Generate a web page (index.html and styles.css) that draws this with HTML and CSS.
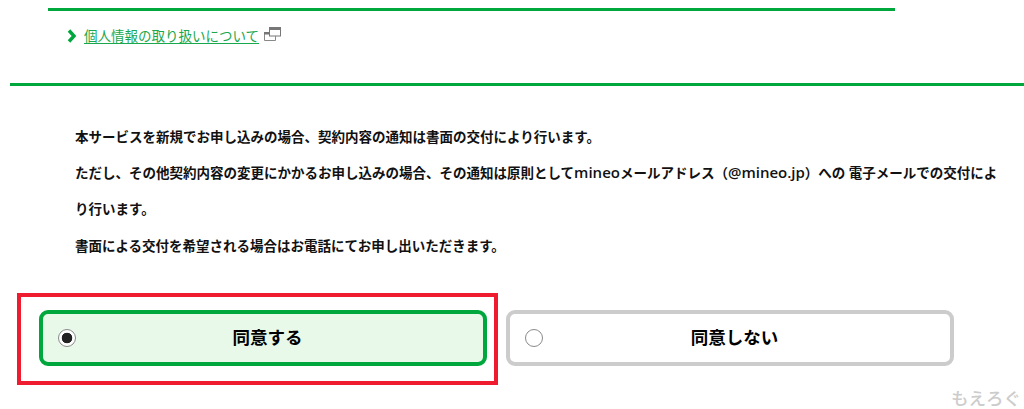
FILE: index.html
```html
<!DOCTYPE html>
<html lang="ja">
<head>
    <meta charset="UTF-8">
    <meta name="viewport" content="width=device-width, initial-scale=1.0">
    <title>同意確認</title>
    <link rel="stylesheet" href="styles.css">
</head>
<body>

    <div class="privacy">
        <div class="privacy-link">
            <svg class="chevron" width="10" height="14" viewBox="0 0 10 14"><path d="M2 1.5 L7 7 L2 12.5" fill="none" stroke="#00a73c" stroke-width="3.4"/></svg>
            <a href="#">個人情報の取り扱いについて</a>
            <svg class="window-icon" width="17" height="14" viewBox="0 0 17 14">
                <rect x="5.5" y="0.5" width="11" height="8.5" fill="#fff" stroke="#777"/>
                <rect x="5" y="0" width="12" height="3" fill="#777"/>
                <path d="M5 5.5H0.5V13.5H11.5V9" fill="none" stroke="#888"/>
                <rect x="0" y="5" width="5" height="2.5" fill="#777"/>
            </svg>
        </div>
    </div>

    <div class="notice">
        <p>本サービスを新規でお申し込みの場合、契約内容の通知は書面の交付により行います。</p>
        <p>ただし、その他契約内容の変更にかかるお申し込みの場合、その通知は原則として<span class="latin">mineo</span>メールアドレス（<span class="latin">@mineo.jp</span>）への 電子メールでの交付により行います。</p>
        <p>書面による交付を希望される場合はお電話にてお申し出いただきます。</p>
    </div>

    <div class="choices">
        <div class="highlight">
            <label class="choice choice-on">
                <span class="radio radio-on"></span>
                <span class="choice-text">同意する</span>
            </label>
        </div>
        <label class="choice">
            <span class="radio"></span>
            <span class="choice-text">同意しない</span>
        </label>
    </div>

    <div class="watermark">もえろぐ</div>

</body>
</html>
```

FILE: styles.css
```css
html, body {
    height: 100%;
}

body {
    margin: 0;
    overflow: hidden;
    background-color: #fff;
    color: #111;
    font-family: "Open Sans", "Noto Sans CJK JP", sans-serif;
    font-size: 13.5px;
}

.privacy {
    margin: 0 129px 0 48px;
    padding-top: 8px;
}

.privacy::before {
    content: "";
    display: block;
    height: 3px;
    background-color: #00a73c;
}

.privacy-link {
    display: flex;
    align-items: center;
    height: 48px;
    padding-left: 19px;
}

.privacy-link a {
    margin-left: 7px;
    color: #1aa84e;
    text-decoration: underline;
    text-underline-offset: 2px;
}

.chevron {
    flex: none;
    margin-top: 2px;
}

.window-icon {
    flex: none;
    margin-left: 5px;
    margin-top: -3px;
}

.notice {
    margin: 24px 0 0 10px;
    padding: 33px 15px 0 65px;
    border-top: 3px solid #00a73c;
    height: 174px;
    font-weight: 600;
}

.notice p {
    margin: 0;
    line-height: 36.2px;
}

.latin {
    font-size: 15px;
    line-height: 1;
}

.choices {
    display: flex;
    align-items: center;
    margin-left: 17px;
}

.highlight {
    box-sizing: border-box;
    width: 481px;
    height: 92px;
    padding: 13px 7px 15px 18px;
    border: 4px solid #ee1c2e;
}

.choice {
    display: flex;
    align-items: center;
    box-sizing: border-box;
    width: 448px;
    height: 56px;
    padding: 0 15px;
    border: 4px solid #ccc;
    border-radius: 9px;
    background-color: #fff;
}

.highlight .choice {
    width: 100%;
}

.highlight + .choice {
    margin-left: 8px;
    margin-top: -3px;
}

.choice-on {
    border-color: #00a73c;
    background-color: #e8f9ea;
}

.radio {
    flex: none;
    box-sizing: border-box;
    width: 18px;
    height: 18px;
    border: 1px solid #8a8a8a;
    border-radius: 50%;
    background-color: #fff;
}

.radio-on {
    background: radial-gradient(circle, #222 0 5px, #fff 5.6px);
}

.choice-text {
    flex: 1;
    padding: 0 9px 3px 0;
    text-align: center;
    color: #000;
    font-size: 17.5px;
    font-weight: 700;
}

.watermark {
    position: absolute;
    right: 3px;
    bottom: -1px;
    color: #ccc;
    font-size: 17.5px;
    font-weight: 500;
    line-height: 24px;
}
```
